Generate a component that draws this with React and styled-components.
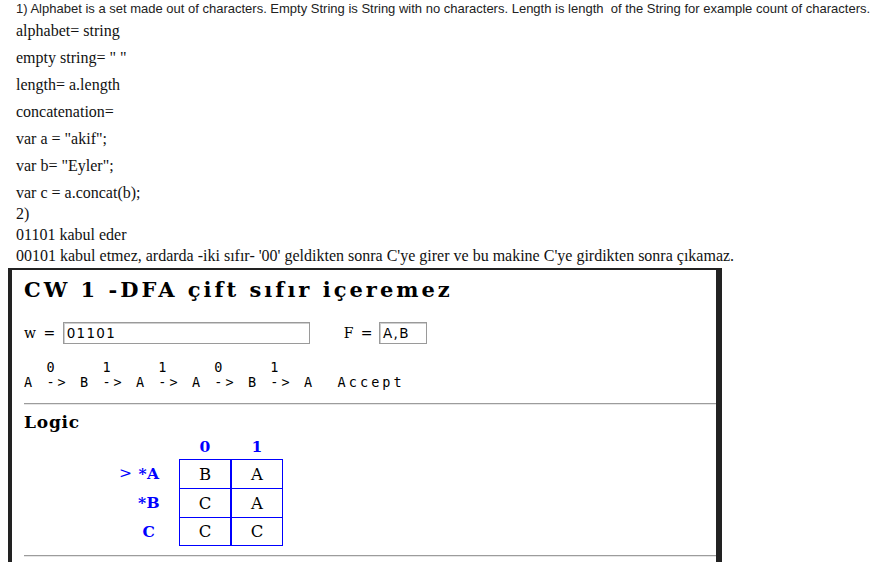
import React from "react";
import styled, { createGlobalStyle } from "styled-components";

const Global = createGlobalStyle`
  html, body { margin: 0; padding: 0; background: #fff; }
  body { width: 880px; height: 562px; overflow: hidden; }
`;

const Page = styled.div`
  display: flex;
  flex-direction: column;
`;

const TextArea = styled.div`
  padding: 1px 16px 0 16px;
  display: flex;
  flex-direction: column;
`;

const Intro = styled.div`
  font-family: "Liberation Sans", Arial, sans-serif;
  font-size: 13px;
  line-height: 16px;
  color: #222;
  white-space: pre;
`;

const Para = styled.div`
  font-family: "Liberation Serif", "Times New Roman", serif;
  font-size: 16px;
  line-height: ${(p) => p.$lh || 27}px;
  color: #111;
  white-space: pre;
`;

const Block = styled.div`
  margin-top: 3px;
  display: flex;
  flex-direction: column;
`;

const Frame = styled.div`
  margin: 2px 0 0 8px;
  width: 714px;
  height: 294px;
  box-sizing: border-box;
  border-style: solid;
  border-color: #222;
  border-width: 2px 6px 0 4px;
  padding: 8px 0 0 12px;
  display: flex;
  flex-direction: column;
`;

const Title = styled.h1`
  margin: 0;
  font-family: "DejaVu Serif", serif;
  font-weight: bold;
  font-size: 21px;
  line-height: 24px;
  letter-spacing: 3px;
  color: #000;
`;

const InputRow = styled.div`
  margin-top: 20px;
  display: flex;
  align-items: center;
  height: 22px;
`;

const Label = styled.span`
  font-family: "DejaVu Serif", serif;
  font-size: 14px;
  letter-spacing: 1.5px;
  color: #000;
  margin-right: ${(p) => p.$gap}px;
  margin-left: ${(p) => p.$left || 0}px;
`;

const Field = styled.div`
  box-sizing: border-box;
  width: ${(p) => p.$w}px;
  height: 22px;
  border: 1px solid #9a9a9a;
  box-shadow: inset 1px 1px 0 #cfcfcf;
  display: flex;
  align-items: center;
  padding-left: 3px;
  font-family: "DejaVu Sans", sans-serif;
  font-size: 13.5px;
  letter-spacing: 1.3px;
  color: #000;
`;

const Trace = styled.pre`
  margin: 16px 0 0 0;
  font-family: "DejaVu Sans Mono", monospace;
  font-size: 13.5px;
  line-height: 15px;
  letter-spacing: 3.07px;
  color: #000;
`;

const Rule = styled.hr`
  margin: ${(p) => p.$top}px 0 0 0;
  border: 0;
  border-top: 1px solid #9c9c9c;
  border-bottom: 1px solid #e6e6e6;
  height: 0;
`;

const Heading = styled.h2`
  margin: 7px 0 0 0;
  font-family: "DejaVu Serif", serif;
  font-weight: bold;
  font-size: 17px;
  line-height: 20px;
  letter-spacing: 0.8px;
  color: #000;
`;

const Table = styled.div`
  margin: 2px 0 0 93px;
  display: grid;
  grid-template-columns: 62px 52px 52px;
  grid-template-rows: 25px repeat(3, 29px);
  font-family: "DejaVu Serif", serif;
  font-size: 15.5px;
`;

const Head = styled.div`
  color: #0000ff;
  font-weight: bold;
  text-align: center;
  line-height: 25px;
`;

const RowLabel = styled.div`
  color: #0000ff;
  font-weight: bold;
  display: flex;
  align-items: center;
  justify-content: center;
  padding-left: 2px;
  letter-spacing: 0.5px;
`;

const LabelText = styled.span`
  position: relative;
`;

const Marker = styled.span`
  position: absolute;
  right: 100%;
  margin-right: 6px;
  font-weight: normal;
`;

const Cell = styled.div`
  box-sizing: border-box;
  border: 1px solid #0000ff;
  border-bottom-width: ${(p) => (p.$last ? 1 : 0)}px;
  display: flex;
  align-items: center;
  justify-content: center;
  color: #000;
  font-size: 16.5px;
`;

const rows = [
  { label: "*A", start: true, cells: ["B", "A"] },
  { label: "*B", cells: ["C", "A"] },
  { label: "C", cells: ["C", "C"] },
];

export default function App() {
  return (
    <Page>
      <Global />
      <TextArea>
        <Intro>
          1) Alphabet is a set made out of characters. Empty String is String with no characters. Length is length  of the String for example count of characters.
        </Intro>
        <Para>alphabet= string</Para>
        <Para>empty string= " "</Para>
        <Para>length= a.length</Para>
        <Para>concatenation=</Para>
        <Para>var a = "akif";</Para>
        <Para>var b= "Eyler";</Para>
        <Block>
          <Para $lh={21}>var c = a.concat(b);</Para>
          <Para $lh={21}>2)</Para>
          <Para $lh={21}>01101 kabul eder</Para>
          <Para $lh={21}>
            00101 kabul etmez, ardarda -iki sıfır- '00' geldikten sonra C'ye girer ve bu makine C'ye girdikten sonra çıkamaz.
          </Para>
        </Block>
      </TextArea>
      <Frame>
        <Title>CW 1 -DFA çift sıfır içeremez</Title>
        <InputRow>
          <Label $gap={6}>w =</Label>
          <Field $w={247}>01101</Field>
          <Label $left={34} $gap={5}>F =</Label>
          <Field $w={48}>A,B</Field>
        </InputRow>
        <Trace>{"  0    1    1    0    1\nA -> B -> A -> A -> B -> A  Accept"}</Trace>
        <Rule $top={13} />
        <Heading>Logic</Heading>
        <Table>
          <div />
          <Head>0</Head>
          <Head>1</Head>
          {rows.map((r, i) => (
            <React.Fragment key={r.label}>
              <RowLabel>
                <LabelText>
                  {r.start && <Marker>&gt;</Marker>}
                  {r.label}
                </LabelText>
              </RowLabel>
              {r.cells.map((c, j) => (
                <Cell key={j} $last={i === rows.length - 1}>
                  {c}
                </Cell>
              ))}
            </React.Fragment>
          ))}
        </Table>
        <Rule $top={9} />
      </Frame>
    </Page>
  );
}
